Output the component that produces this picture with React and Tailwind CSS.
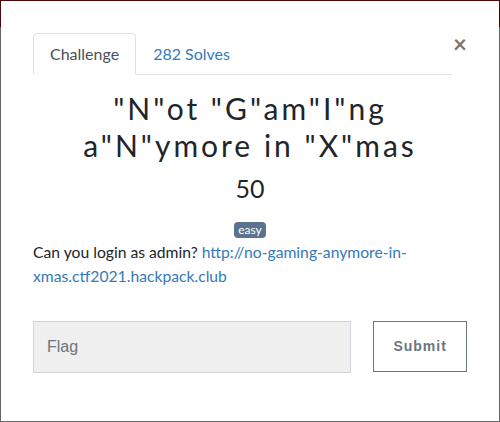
export default function App() {
  return (
    <div className="w-[500px] h-[422px] p-px bg-[linear-gradient(to_bottom,#4a0a0a_0px,#4a0a0a_27px,#666666_27px,#666666_100%)]" style={{ fontFamily: "Lato, 'Liberation Sans', sans-serif" }}>
      <div className="bg-white w-full h-full pl-8 pr-[32px] pt-8">
        <div className="flex items-start">
          <div className="flex flex-1 border-b border-[#dee2e6] h-[42px]">
            <div className="h-[42px] px-[16px] border border-[#dee2e6] border-b-white rounded-t-[4px] flex items-center text-[16px] text-[#495057] bg-white">Challenge</div>
            <div className="h-[41px] px-[17px] flex items-center text-[16px] text-[#337ab7]">282 Solves</div>
          </div>
          <button className="w-[14px] ml-px -mt-[1px] text-[#777] text-[24px] font-bold leading-none">×</button>
        </div>
        <div className="text-center mt-[15px]">
          <h2 className="text-[30px] leading-[37px] text-[#212529] tracking-[3px]">"N"ot "G"am"I"ng<br />a"N"ymore in "X"mas</h2>
          <div className="text-[25px] leading-[30px] text-[#212529] mt-[9px]">50</div>
          <div className="mt-[19px] flex justify-center">
            <span className="bg-[#5b7290] text-white text-[12px] leading-[16px] px-[4px] rounded-[4px]">easy</span>
          </div>
        </div>
        <p className="text-[15.7px] leading-[24px] text-[#212529] mt-[2px]">Can you login as admin? <a className="text-[#337ab7]">http://no-gaming-anymore-in-xmas.ctf2021.hackpack.club</a></p>
        <div className="flex mt-[33px] gap-[22px]">
          <div className="w-[319px] h-[52px] bg-[#efefef] border border-[#ced4da] flex items-center pl-[13px] text-[16px] text-[#6c757d]" style={{ fontFamily: "'Liberation Sans', sans-serif" }}>Flag</div>
          <button className="w-[94px] h-[51px] border border-[#6c757d] text-[#6c757d] text-[14px] font-bold tracking-[1px]" style={{ fontFamily: "'Liberation Sans', sans-serif" }}>Submit</button>
        </div>
      </div>
    </div>
  );
}
